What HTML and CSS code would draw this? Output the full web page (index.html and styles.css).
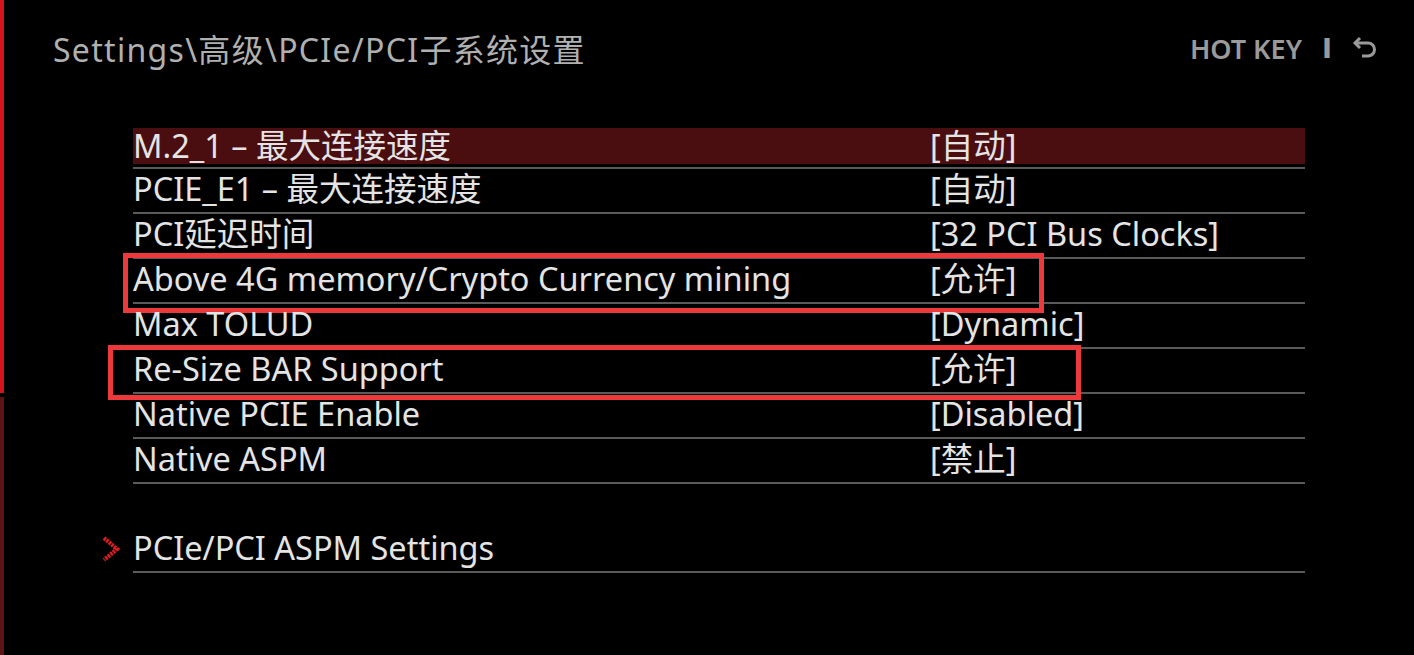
FILE: index.html
```html
<!DOCTYPE html>
<html lang="zh">
<head>
<meta charset="utf-8">
<title>Settings</title>
<link rel="stylesheet" href="styles.css">
</head>
<body>
<div class="edge"><div class="edge-top"></div><div class="edge-bottom"></div></div>
<div class="page">
  <header class="header">
    <div class="title">Settings\高级\PCIe/PCI子系统设置</div>
    <div class="hotkey">
      <span class="hk-text">HOT KEY</span>
      <span class="hk-sep">I</span>
      <svg class="hk-back" viewBox="0 0 26 24" width="26" height="24">
        <path d="M8 2 L3 7 L8 12" fill="none" stroke="#9a9a9a" stroke-width="3" stroke-linejoin="miter"/>
        <path d="M3 7 H16 A6.5 6.5 0 0 1 16 20 H10" fill="none" stroke="#9a9a9a" stroke-width="3"/>
      </svg>
    </div>
  </header>

  <div class="list">
    <div class="row sel"><span class="label">M.2_1 – 最大连接速度</span><span class="value">[自动]</span></div>
    <div class="row"><span class="label">PCIE_E1 – 最大连接速度</span><span class="value">[自动]</span></div>
    <div class="row"><span class="label">PCI延迟时间</span><span class="value">[32 PCI Bus Clocks]</span></div>
    <div class="row"><span class="label">Above 4G memory/Crypto Currency mining</span><span class="value">[允许]</span><span class="mark mark-a"></span></div>
    <div class="row"><span class="label">Max TOLUD</span><span class="value">[Dynamic]</span></div>
    <div class="row"><span class="label">Re-Size BAR Support</span><span class="value">[允许]</span><span class="mark mark-b"></span></div>
    <div class="row"><span class="label">Native PCIE Enable</span><span class="value">[Disabled]</span></div>
    <div class="row"><span class="label">Native ASPM</span><span class="value">[禁止]</span></div>
  </div>

  <div class="list sub">
    <div class="row">
      <svg class="chev" viewBox="0 0 18 26" width="18" height="26">
        <path d="M2 2 L15 13 L2 24" fill="none" stroke="#e01c22" stroke-width="4.2" stroke-dasharray="2.4 0.9"/>
      </svg>
      <span class="label">PCIe/PCI ASPM Settings</span>
    </div>
  </div>
</div>
</body>
</html>
```
FILE: styles.css
```css
html, body {
  margin: 0;
  padding: 0;
  background: #000;
  height: 100%;
  overflow: hidden;
}
body {
  font-family: "Noto Sans", "Noto Sans CJK SC", sans-serif;
  color: #e4e4e4;
  position: relative;
}
.edge {
  position: absolute;
  left: 0;
  top: 0;
  bottom: 0;
  width: 4px;
  display: flex;
  flex-direction: column;
}
.edge-top {
  height: 393px;
  background: #d3141b;
}
.edge-bottom {
  flex: 1;
  margin-top: 4px;
  background: #5c1414;
}
.page {
  padding: 0 36px 0 53px;
}
.header {
  display: flex;
  justify-content: space-between;
  align-items: center;
  height: 104px;
}
.title {
  font-size: 32px;
  line-height: 40px;
  letter-spacing: 1.3px;
  color: #b0b0b0;
  margin-top: -4px;
}
.hotkey {
  display: flex;
  align-items: center;
  color: #9a9a9a;
  font-size: 27px;
  font-weight: 600;
  margin-top: -8px;
}
.hk-sep {
  font-family: "DejaVu Sans", sans-serif;
  font-size: 27px;
  font-weight: 700;
  margin-left: 20px;
  margin-right: 20px;
}
.hk-back {
  display: block;
}
.list {
  margin-left: 80px;
  width: 1172px;
  display: flex;
  flex-direction: column;
  margin-top: 20px;
}
.row {
  position: relative;
  display: flex;
  align-items: center;
  height: 45px;
  box-sizing: border-box;
  padding-bottom: 3px;
  border-bottom: 2px solid #5a5a5a;
  font-size: 32.5px;
  line-height: 36px;
  white-space: nowrap;
}
.row.sel {
  padding-top: 4px;
  background: #4b0e10;
  background-clip: content-box;
}
.label {
  width: 797px;
  flex: none;
}
.value {
  flex: none;
}
.mark {
  position: absolute;
  border: 5px solid #ec3a3c;
  pointer-events: none;
}
.mark-a {
  left: -10px;
  top: -6px;
  width: 911px;
  height: 50px;
}
.mark-b {
  left: -25px;
  top: -4px;
  width: 963px;
  height: 45px;
}
.sub {
  margin-top: 44px;
}
.chev {
  position: absolute;
  left: -31px;
  top: 8px;
}
```
